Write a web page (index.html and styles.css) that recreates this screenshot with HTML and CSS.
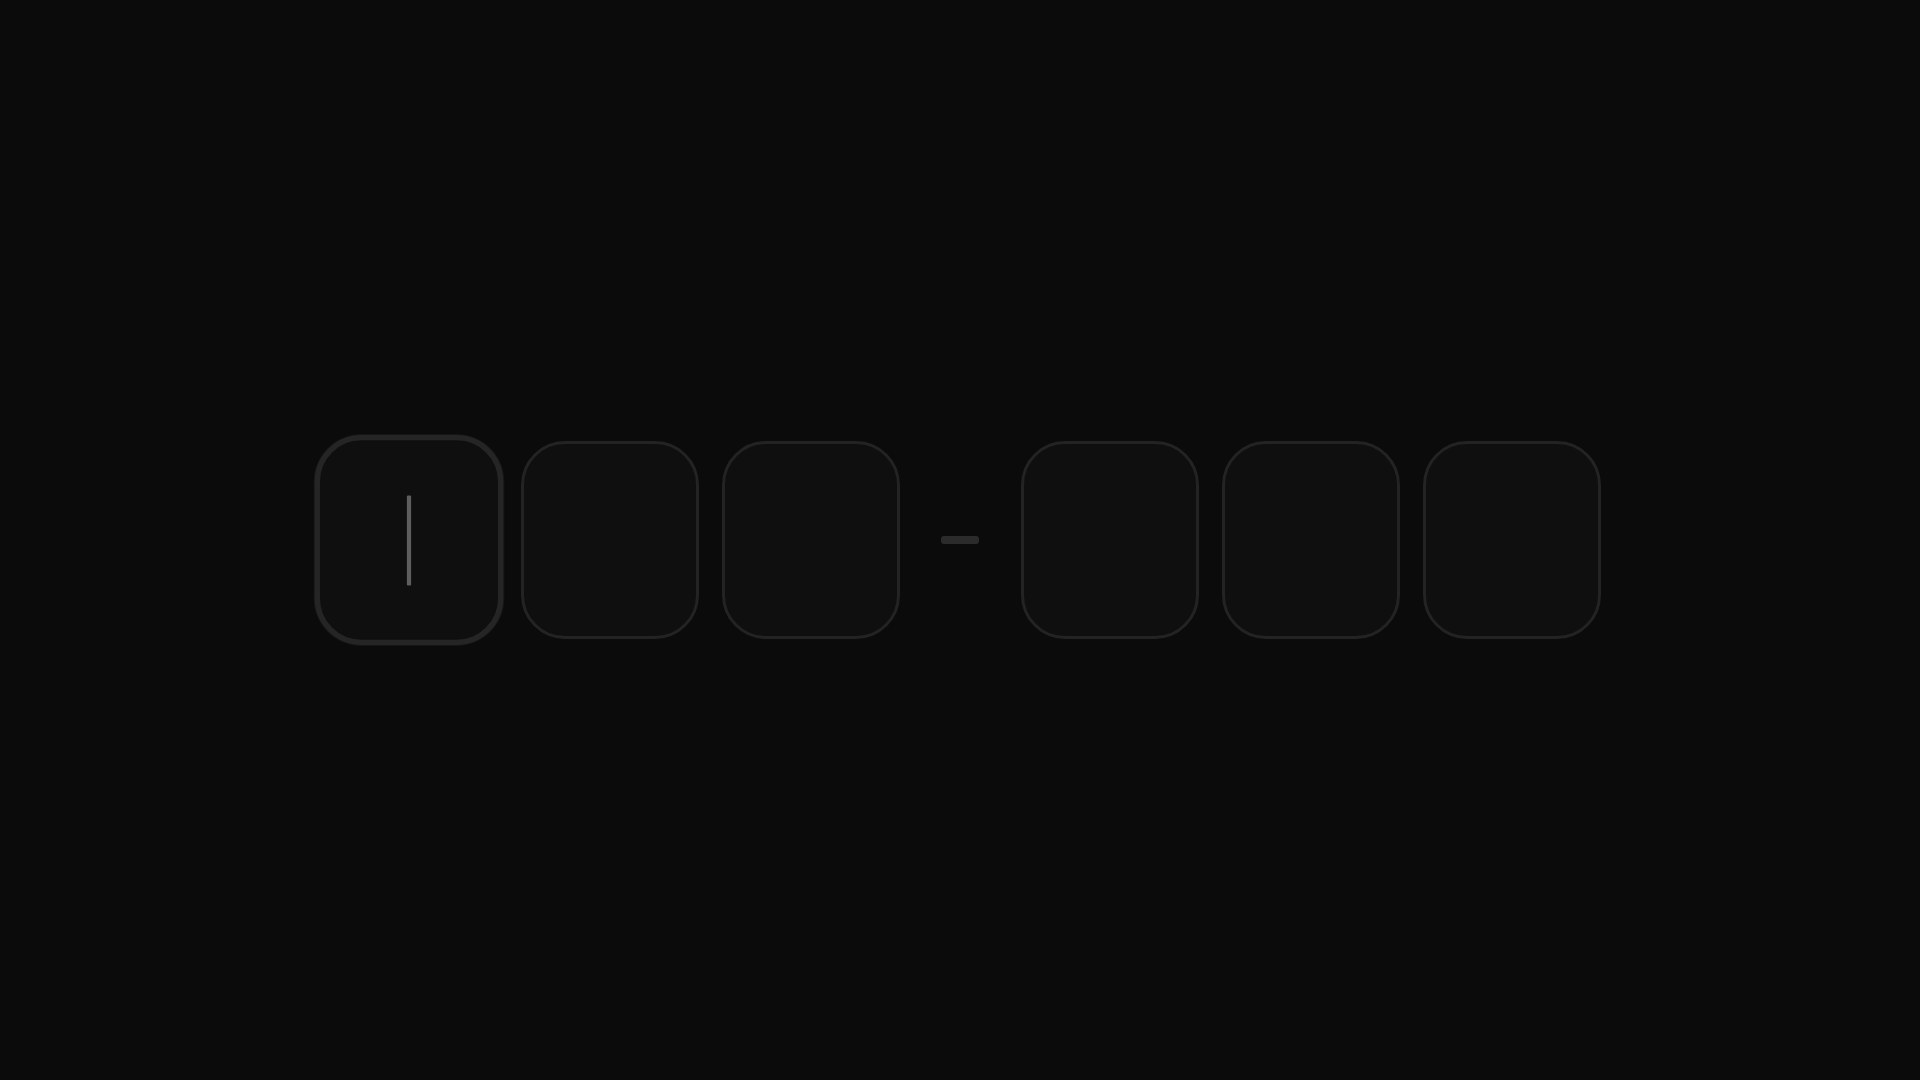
FILE: index.html
```html
<!DOCTYPE html>
<html lang="en">
<head>
<meta charset="utf-8">
<title>Verification code</title>
<link rel="stylesheet" href="styles.css">
</head>
<body>
<main class="stage">
  <div class="otp" role="group" aria-label="Verification code">
    <div class="slot slot-active"><span class="caret"></span></div>
    <div class="slot"></div>
    <div class="slot"></div>
    <div class="sep"><span class="dash"></span></div>
    <div class="slot"></div>
    <div class="slot"></div>
    <div class="slot"></div>
  </div>
</main>
</body>
</html>
```
FILE: styles.css
```css
html, body {
  margin: 0;
  padding: 0;
  height: 100%;
  background: #0b0b0b;
  font-family: "Inter", "Liberation Sans", sans-serif;
}

.stage {
  height: 100vh;
  display: flex;
  align-items: center;
  justify-content: center;
}

.otp {
  display: flex;
  align-items: center;
  gap: 23px;
}

.slot {
  box-sizing: border-box;
  width: 178px;
  height: 198px;
  border: 3px solid #232323;
  border-radius: 44px;
  background: #0f0f0f;
  display: flex;
  align-items: center;
  justify-content: center;
}

.slot-active {
  border: 5px solid #252525;
  transform: scale(1.06);
  box-shadow: 0 0 0 1px #161616;
}

.caret {
  display: block;
  width: 4px;
  height: 85px;
  border-radius: 1px;
  background: #5e5e5e;
}

.sep {
  width: 75px;
  display: flex;
  justify-content: center;
  align-items: center;
}

.dash {
  display: block;
  width: 38px;
  height: 8px;
  border-radius: 3px;
  background: #2b2b2b;
}
```
